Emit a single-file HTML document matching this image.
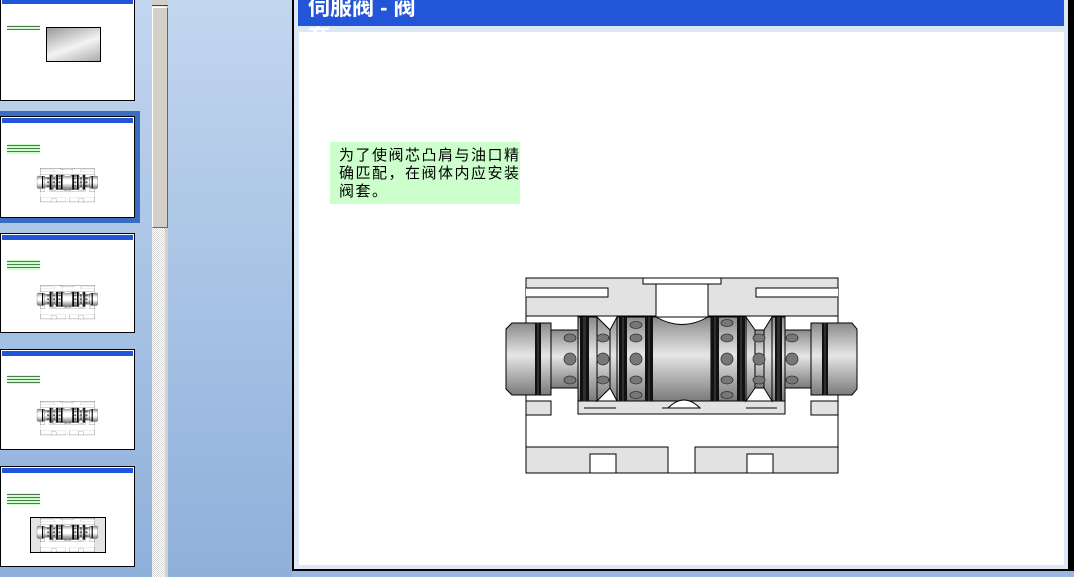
<!DOCTYPE html>
<html><head><meta charset="utf-8"><style>
*{margin:0;padding:0;box-sizing:border-box}
body{width:1074px;height:577px;overflow:hidden;position:relative;background:linear-gradient(#c2d6ef,#8eb0db);font-family:"Liberation Sans","Noto Sans CJK SC",sans-serif}
.abs{position:absolute}
.th{position:absolute;left:0;width:135px;background:#fff;border:1px solid #000}
.th .bar{position:absolute;left:1px;right:1px;top:1px;height:5px;background:#2255d8}
.th .g{position:absolute;left:6px;width:33px;background:repeating-linear-gradient(#ccffcc 0 1px,#557755 1px 2px,#ccffcc 2px 3px)}
.th svg{filter:contrast(1.6)}
</style></head><body>
<svg width="0" height="0" style="position:absolute">
<defs>
<linearGradient id="cy" x1="0" y1="0" x2="0" y2="1"><stop offset="0" stop-color="#8a8a8a"/><stop offset=".45" stop-color="#e6e6e6"/><stop offset="1" stop-color="#7a7a7a"/></linearGradient>
<symbol id="valve" viewBox="500 270 370 210">
<g stroke="#000" stroke-width="1">
<rect x="526" y="278" width="312" height="195" fill="#fff"/>
<rect x="526" y="278" width="130" height="38" fill="#e2e2e2"/>
<rect x="708" y="278" width="130" height="38" fill="#e2e2e2"/>
<rect x="643" y="278" width="78" height="6" fill="#fff"/>
<path d="M526 288H608V297H526" fill="#fff"/>
<path d="M838 288H756V297H838" fill="#fff"/>
<rect x="526" y="401" width="25" height="14" fill="#e2e2e2"/>
<rect x="578" y="401" width="207" height="13" fill="#e2e2e2"/>
<rect x="811" y="401" width="27" height="14" fill="#e2e2e2"/>
<rect x="526" y="447" width="142" height="26" fill="#e2e2e2"/>
<rect x="695" y="447" width="143" height="26" fill="#e2e2e2"/>
<rect x="590" y="454" width="26" height="19" fill="#fff"/>
<rect x="747" y="454" width="26" height="19" fill="#fff"/>
<path d="M584 408H616M662 408H700M746 408H777"/>
<rect x="551" y="330" width="260" height="58" fill="url(#cy)"/>
<rect x="578" y="317" width="19" height="84" fill="url(#cy)"/>
<rect x="617" y="317" width="94" height="84" fill="url(#cy)"/>
<rect x="711" y="317" width="35" height="84" fill="url(#cy)"/>
<rect x="772" y="317" width="13" height="84" fill="url(#cy)"/>
<path d="M597 317L610 330V388L597 401Z" fill="url(#cy)"/>
<path d="M617 317L610 330V388L617 401Z" fill="url(#cy)"/>
<path d="M746 317L755 330V388L746 401Z" fill="url(#cy)"/>
<path d="M772 317L764 330V388L772 401Z" fill="url(#cy)"/>
<path d="M656 317Q682 332 708 317Z" fill="#fff"/>
<path d="M668 408Q684 392 700 408Z" fill="#fff"/>
<path d="M512 323H551V395H512L506 389V329Z" fill="url(#cy)"/>
<path d="M852 323H811V395H852L857 389V329Z" fill="url(#cy)"/>
</g>
<g fill="#111">
<rect x="535" y="323" width="6" height="72"/><rect x="822" y="323" width="6" height="72"/>
<rect x="580" y="317" width="9" height="84"/><rect x="619" y="317" width="8" height="84"/>
<rect x="645" y="317" width="8" height="84"/><rect x="711" y="317" width="8" height="84"/>
<rect x="737" y="317" width="8" height="84"/><rect x="775" y="317" width="7" height="84"/>
</g>
<g fill="#444" opacity=".6">
<rect x="537" y="323" width="2" height="72"/><rect x="824" y="323" width="2" height="72"/>
<rect x="583" y="317" width="3" height="84"/><rect x="622" y="317" width="2" height="84"/>
<rect x="648" y="317" width="2" height="84"/><rect x="714" y="317" width="2" height="84"/>
<rect x="740" y="317" width="2" height="84"/><rect x="777" y="317" width="3" height="84"/>
</g>
<g fill="#777" stroke="#333" stroke-width=".8">
<ellipse cx="570" cy="338" rx="6" ry="4"/><ellipse cx="570" cy="359" rx="6" ry="6"/><ellipse cx="570" cy="380" rx="6" ry="4"/>
<ellipse cx="603" cy="338" rx="6" ry="4"/><ellipse cx="603" cy="359" rx="6" ry="6"/><ellipse cx="603" cy="380" rx="6" ry="4"/>
<ellipse cx="636" cy="325" rx="6" ry="3.5"/><ellipse cx="636" cy="338" rx="6" ry="4"/><ellipse cx="636" cy="359" rx="6" ry="6"/><ellipse cx="636" cy="380" rx="6" ry="4"/><ellipse cx="636" cy="395" rx="6" ry="3.5"/>
<ellipse cx="727" cy="323" rx="6" ry="3.5"/><ellipse cx="727" cy="338" rx="6" ry="4"/><ellipse cx="727" cy="359" rx="6" ry="6"/><ellipse cx="727" cy="380" rx="6" ry="4"/><ellipse cx="727" cy="395" rx="6" ry="3.5"/>
<ellipse cx="759" cy="338" rx="6" ry="4"/><ellipse cx="759" cy="359" rx="6" ry="6"/><ellipse cx="759" cy="380" rx="6" ry="4"/>
<ellipse cx="792" cy="338" rx="6" ry="4"/><ellipse cx="792" cy="359" rx="6" ry="6"/><ellipse cx="792" cy="380" rx="6" ry="4"/>
</g>
</symbol>
</defs></svg>

<!-- thumbnails -->
<div class="th" style="top:-3px;height:104px"><div class="bar"></div><div class="g" style="top:27px;height:5px"></div><div class="abs" style="left:45px;top:29px;width:55px;height:35px;border:1px solid #000;background:linear-gradient(160deg,#999,#f4f4f4 55%,#aaa)"></div></div>
<div class="abs" style="left:0;top:111px;width:140px;height:112px;background:#3a6cc4"></div>
<div class="th" style="top:116px;height:102px"><div class="bar"></div><div class="g" style="top:27px;height:10px"></div><svg class="abs" style="left:35px;top:49px" width="64" height="38"><use href="#valve" width="64" height="38"/></svg></div>
<div class="th" style="top:233px;height:100px"><div class="bar"></div><div class="g" style="top:26px;height:10px"></div><svg class="abs" style="left:35px;top:49px" width="64" height="38"><use href="#valve" width="64" height="38"/></svg></div>
<div class="th" style="top:349px;height:101px"><div class="bar"></div><div class="g" style="top:25px;height:9px"></div><svg class="abs" style="left:35px;top:49px" width="64" height="38"><use href="#valve" width="64" height="38"/></svg></div>
<div class="th" style="top:466px;height:101px"><div class="bar"></div><div class="g" style="top:26px;height:12px"></div><div class="abs" style="left:29px;top:50px;width:76px;height:36px;border:1px solid #000;background:#e4e4e4"></div><svg class="abs" style="left:35px;top:49px" width="64" height="38"><use href="#valve" width="64" height="38"/></svg></div>

<!-- scrollbar -->
<div class="abs" style="left:152px;top:0;width:16px;height:577px;background:repeating-conic-gradient(#fff 0 25%,#d8d8d8 0 50%) 0 0/2px 2px;border-right:3px solid #d4d0c8"></div>
<div class="abs" style="left:152px;top:0;width:16px;height:6px;background:#d4d0c8;border-bottom:1px solid #444"></div>
<div class="abs" style="left:152px;top:7px;width:16px;height:221px;background:#d4d0c8;border:1px solid;border-color:#fff #666 #666 #fff"></div>

<!-- slide -->
<div class="abs" style="left:292px;top:0;width:782px;height:571px;background:#000"></div>
<div class="abs" style="left:294px;top:0;width:774px;height:569px;background:#dde8f6"></div>
<div class="abs" style="left:299px;top:32px;width:765px;height:533px;background:#fff"></div>
<div class="abs" style="left:298px;top:0;width:766px;height:26px;background:#2255d8"></div>
<div class="abs" style="left:308px;top:-7px;color:#fff;font-size:22px;font-weight:bold;line-height:30px;width:120px">伺服阀 - 阀 套</div>
<div class="abs" style="left:292px;top:571px;width:782px;height:6px;background:#9cb8e0"></div>

<div class="abs" style="left:330px;top:142px;width:190px;height:62px;background:#ccffcc;padding:5px 0 0 9px;font-size:15px;line-height:18px;letter-spacing:1.5px;color:#000;white-space:nowrap">为了使阀芯凸肩与油口精<br>确匹配，在阀体内应安装<br>阀套。</div>

<svg class="abs" style="left:500px;top:270px" width="370" height="210"><use href="#valve" width="370" height="210"/></svg>
</body></html>
